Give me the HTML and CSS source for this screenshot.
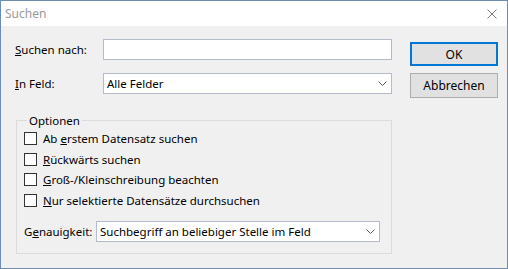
FILE: index.html
```html
<!DOCTYPE html>
<html lang="de">
<head>
    <meta charset="UTF-8">
    <meta name="viewport" content="width=device-width, initial-scale=1.0">
    <link rel="stylesheet" href="styles.css">
    <title>Suchen</title>
</head>
<body>
    <div class="window">
        <div class="titlebar">
            <span class="title">Suchen</span>
            <svg class="close" width="10" height="10" viewBox="0 0 10 10">
                <path d="M0.5 0.5 L9.5 9.5 M9.5 0.5 L0.5 9.5" stroke="#777" stroke-width="1" fill="none"/>
            </svg>
        </div>
        <div class="content">
            <form class="search-form">
                <div class="field-row">
                    <label class="field-label" for="search-term"><u>S</u>uchen nach:</label>
                    <input id="search-term" class="text-input" type="text">
                </div>
                <div class="field-row">
                    <label class="field-label"><u>I</u>n Feld:</label>
                    <div class="combo">
                        <span>Alle Felder</span>
                        <svg width="9" height="5" viewBox="0 0 9 5"><path d="M0.5 0.5 L4.5 4.5 L8.5 0.5" stroke="#555" fill="none"/></svg>
                    </div>
                </div>
                <fieldset class="options">
                    <legend>Optionen</legend>
                    <div class="check-row"><span class="checkbox"></span><span>Ab <u>e</u>rstem Datensatz suchen</span></div>
                    <div class="check-row"><span class="checkbox"></span><span><u>R</u>ückwärts suchen</span></div>
                    <div class="check-row"><span class="checkbox"></span><span><u>G</u>roß-/Kleinschreibung beachten</span></div>
                    <div class="check-row"><span class="checkbox"></span><span><u>N</u>ur selektierte Datensätze durchsuchen</span></div>
                    <div class="accuracy-row">
                        <label class="accuracy-label">G<u>e</u>nauigkeit:</label>
                        <div class="combo combo-wide">
                            <span>Suchbegriff an beliebiger Stelle im Feld</span>
                            <svg width="9" height="5" viewBox="0 0 9 5"><path d="M0.5 0.5 L4.5 4.5 L8.5 0.5" stroke="#555" fill="none"/></svg>
                        </div>
                    </div>
                </fieldset>
            </form>
            <div class="buttons">
                <button class="btn btn-default" type="button">OK</button>
                <button class="btn" type="button">Abbrechen</button>
            </div>
        </div>
    </div>
</body>
</html>
```

FILE: styles.css
```css
body {
    margin: 0;
    font-family: "Noto Sans", "Liberation Sans", sans-serif;
    font-size: 11.5px;
    color: #000;
}

.window {
    box-sizing: border-box;
    width: 508px;
    height: 269px;
    border: 1px solid #6c8db0;
    background-color: #f0f0f0;
}

.titlebar {
    height: 25px;
    background-color: #fff;
    display: flex;
    align-items: center;
    justify-content: space-between;
    padding: 0 10px 0 4px;
}

.title {
    color: #9a9a9a;
    font-size: 12px;
}

.content {
    display: flex;
    padding: 13px 0 0 14px;
}

.search-form {
    width: 377px;
    margin: 0;
}

.field-row {
    display: flex;
    align-items: center;
    margin-bottom: 13px;
}

.field-label {
    width: 88px;
}

.text-input {
    box-sizing: border-box;
    width: 289px;
    height: 21px;
    border: 1px solid #b4bccb;
    background: #fff;
    margin: 0;
    outline: none;
}

.combo {
    box-sizing: border-box;
    width: 289px;
    height: 21px;
    border: 1px solid #b4bccb;
    background: #fff;
    display: flex;
    align-items: center;
    justify-content: space-between;
    padding: 0 4px 0 3px;
}

.options {
    margin: 19px 0 0 1px;
    padding: 0 0 10px 7px;
    border: 1px solid #dcdcdc;
    width: 376px;
    box-sizing: border-box;
    height: 141px;
}

.options legend {
    padding: 0 2px;
    margin-left: 3px;
}

.check-row {
    display: flex;
    align-items: center;
    height: 20.7px;
}

.checkbox {
    box-sizing: border-box;
    width: 13px;
    height: 13px;
    border: 1px solid #333;
    background: #fff;
    margin-right: 6px;
}

.accuracy-row {
    display: flex;
    align-items: center;
    margin-top: 10px;
}

.accuracy-label {
    width: 72px;
}

.combo-wide {
    width: 284px;
}

.buttons {
    display: flex;
    flex-direction: column;
    gap: 7px;
    margin: 3px 0 0 18px;
}

.btn {
    box-sizing: border-box;
    width: 88px;
    height: 25px;
    border: 1px solid #adadad;
    background-color: #e1e1e1;
    font-family: inherit;
    font-size: 12px;
    padding: 0;
}

.btn-default {
    border: 2px solid #0078d7;
    height: 24px;
}
```
